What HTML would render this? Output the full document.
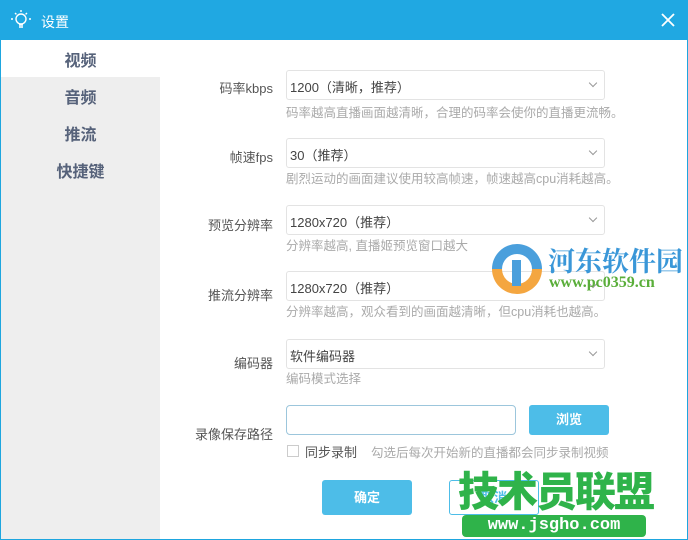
<!DOCTYPE html><html><head><meta charset="utf-8"><style>
*{margin:0;padding:0;box-sizing:border-box}
body{width:688px;height:540px;overflow:hidden;background:#fff;font-family:"Liberation Sans","Noto Sans CJK SC",sans-serif;position:relative}
.frame{position:absolute;inset:0;border:1px solid #1ea6df;border-top:none}
.title{position:absolute;left:0;top:0;width:688px;height:40px;background:#20a8e2;color:#fff;font-size:14px}
.side{position:absolute;left:1px;top:77px;width:159px;height:462px;background:#eeeeee}
.nav{position:absolute;left:1px;width:159px;text-align:center;font-size:16px;font-weight:bold;color:#56627a}
.lab{position:absolute;right:415px;font-size:13px;color:#555;text-align:right;white-space:nowrap}
.sel{position:absolute;left:286px;width:319px;height:30px;border:1px solid #e3e3e3;border-radius:3px;font-size:13px;color:#444;padding:6px 0 0 3px}
.sel:after{content:"";position:absolute;right:8px;top:9px;width:5px;height:5px;border-right:1px solid #999;border-bottom:1px solid #999;transform:rotate(45deg)}
.hint{position:absolute;left:286px;font-size:12.5px;color:#aaa;white-space:nowrap}
.btn{position:absolute;background:#4dbde8;color:#fff;font-size:13px;font-weight:bold;text-align:center;border-radius:3px}
</style></head><body>
<div class="frame"></div>
<div class="title">
<svg style="position:absolute;left:10px;top:9px" width="22" height="22" viewBox="0 0 22 22" fill="none" stroke="#fff" stroke-width="1.4"><circle cx="11" cy="10" r="5"/><path d="M9 16h4M9 18h4M11 1v2M3 10H1M21 10h-2M5 4l1.4 1.4M17 4l-1.4 1.4"/></svg>
<span style="position:absolute;left:41px;top:12px">设置</span>
<svg style="position:absolute;left:661px;top:13px" width="14" height="14" viewBox="0 0 14 14" stroke="#fff" stroke-width="1.8"><path d="M1 1L13 13M13 1L1 13"/></svg>
</div>
<div class="side"></div>
<div class="nav" style="top:47px">视频</div>
<div class="nav" style="top:84px">音频</div>
<div class="nav" style="top:121px">推流</div>
<div class="nav" style="top:158px">快捷键</div>

<div class="lab" style="top:78px">码率kbps</div>
<div class="sel" style="top:70px">1200（清晰，推荐）</div>
<div class="hint" style="top:102px">码率越高直播画面越清晰，合理的码率会使你的直播更流畅。</div>

<div class="lab" style="top:147px">帧速fps</div>
<div class="sel" style="top:138px">30（推荐）</div>
<div class="hint" style="top:168px">剧烈运动的画面建议使用较高帧速，帧速越高cpu消耗越高。</div>

<div class="lab" style="top:215px">预览分辨率</div>
<div class="sel" style="top:205px">1280x720（推荐）</div>
<div class="hint" style="top:235px">分辨率越高, 直播姬预览窗口越大</div>

<div class="lab" style="top:285px">推流分辨率</div>
<div class="sel" style="top:271px">1280x720（推荐）</div>
<div class="hint" style="top:301px">分辨率越高，观众看到的画面越清晰，但cpu消耗也越高。</div>

<div class="lab" style="top:353px">编码器</div>
<div class="sel" style="top:339px">软件编码器</div>
<div class="hint" style="top:368px">编码模式选择</div>

<div class="lab" style="top:424px">录像保存路径</div>
<div style="position:absolute;left:286px;top:405px;width:230px;height:30px;border:1px solid #9cc6dc;border-radius:4px"></div>
<div class="btn" style="left:529px;top:405px;width:80px;height:30px;line-height:30px">浏览</div>
<div style="position:absolute;left:287px;top:445px;width:12px;height:12px;border:1px solid #ccc"></div>
<div style="position:absolute;left:305px;top:442px;font-size:13px;color:#555">同步录制</div>
<div class="hint" style="left:371px;top:442px;font-size:12.5px">勾选后每次开始新的直播都会同步录制视频</div>

<div class="btn" style="left:322px;top:480px;width:90px;height:35px;line-height:35px">确定</div>
<div style="position:absolute;left:449px;top:480px;width:90px;height:35px;border:1px solid #4dbde8;border-radius:3px;color:#4dbde8;font-size:13px;font-weight:bold;text-align:center;line-height:33px">取消</div>

<svg style="position:absolute;left:488px;top:240px" width="58" height="58" viewBox="0 0 58 58"><path d="M29 4a25 25 0 0 0-25 25h10a15 15 0 0 1 30 0h10A25 25 0 0 0 29 4z" fill="#4a9fdc"/><path d="M4 29a25 25 0 0 0 50 0H44a15 15 0 0 1-30 0z" fill="#f4a640"/><rect x="24" y="20" width="9" height="26" fill="#4a9fdc"/></svg>
<div style="position:absolute;left:548px;top:240px;font-size:27px;font-weight:bold;color:#3a97d8;font-family:'Noto Serif CJK SC',serif;white-space:nowrap">河东软件园</div>
<div style="position:absolute;left:549px;top:274px;font-size:16px;font-weight:bold;color:#5aae3a;font-family:'Liberation Serif',serif">www.pc0359.cn</div>
<div style="position:absolute;left:458px;top:470px;font-size:41px;font-weight:900;color:#2fb34a;letter-spacing:-2px;white-space:nowrap;line-height:44px">技术员联盟</div>
<div style="position:absolute;left:462px;top:515px;width:184px;height:22px;background:#2fb34a;border-radius:4px;color:#fff;font-family:'Liberation Mono',monospace;font-weight:bold;font-size:17px;text-align:center;line-height:22px">www.jsgho.com</div>
</body></html>
